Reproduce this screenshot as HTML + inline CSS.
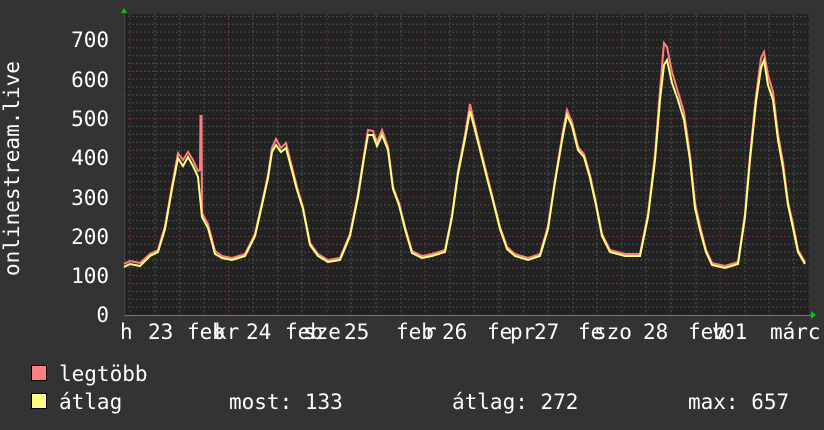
<!DOCTYPE html>
<html><head><meta charset="utf-8"><style>
html,body{margin:0;padding:0;background:#333;}
svg{display:block}
text{font-family:"DejaVu Sans Mono","Liberation Mono",monospace;fill:#fff;}
</style></head><body>
<svg width="824" height="430" xmlns="http://www.w3.org/2000/svg">
<rect width="824" height="430" fill="#333"/>
<rect x="124" y="14" width="685" height="301" fill="#222"/>
<g stroke="#4d4d4d" stroke-dasharray="2,2" stroke-width="1">
<path d="M124 307.1H809M124 299.3H809M124 291.4H809M124 283.6H809M124 267.9H809M124 260H809M124 252.1H809M124 244.3H809M124 228.6H809M124 220.7H809M124 212.9H809M124 205H809M124 189.3H809M124 181.4H809M124 173.6H809M124 165.7H809M124 150H809M124 142.1H809M124 134.3H809M124 126.4H809M124 110.7H809M124 102.9H809M124 95H809M124 87.1H809M124 71.4H809M124 63.6H809M124 55.7H809M124 47.9H809M124 32.1H809M124 24.3H809M124 16.4H809"/>
<path d="M155 14V315M179.5 14V315M204 14V315M253 14V315M278 14V315M302 14V315M351 14V315M376 14V315M401 14V315M450 14V315M474 14V315M499 14V315M548 14V315M573 14V315M597 14V315M646 14V315M671 14V315M696 14V315M745 14V315M769 14V315M794 14V315"/>
</g>
<g stroke="#6b3333" stroke-dasharray="2,2" stroke-width="1">
<path d="M124 275.7H809M124 236.4H809M124 197.1H809M124 157.9H809M124 118.6H809M124 79.3H809M124 40H809"/>
<path d="M130 14V315M228.5 14V315M327 14V315M425 14V315M523.5 14V315M622 14V315M720 14V315"/>
</g>
<line x1="124" y1="315.5" x2="812" y2="315.5" stroke="#777"/>
<line x1="124.5" y1="12" x2="124.5" y2="318" stroke="#444"/>
<polygon points="121,13 127,13 124,8" fill="#0c0"/>
<polygon points="811,311 811,319 816,315" fill="#0c0"/>
<polyline fill="none" stroke="#ff7f7f" stroke-width="2" points="124,264 130,261 140,263 150,254 158,250 165,226 172,186 178,153 183,160 188,152 193,160 198,171 200,170 200.5,116 201.5,116 202,213 208,224 215,251 222,256 232,258 245,254 255,234 262,203 268,175 272,148 276,139 281,148 286,143 291,163 297,187 303,207 310,243 318,254 328,260 340,258 350,234 358,194 364,155 368,130 373,131 377,142 382,130 388,147 393,187 399,203 405,227 412,251 422,256 432,254 445,250 452,215 458,171 465,135 470,104 475,126 480,147 487,175 493,199 500,227 507,247 515,254 528,258 540,254 548,226 555,180 563,131 567,110 572,122 578,147 584,154 590,175 596,203 602,234 610,250 625,254 640,254 648,214 655,155 660,90 664,43 667,47 672,72 678,92 684,112 690,155 695,203 700,226 706,250 712,263 725,266 738,262 745,214 750,155 756,96 761,58 764,52 768,75 773,92 778,134 783,162 788,202 793,224 798,250 805,262"/>
<polyline fill="none" stroke="#ffff7f" stroke-width="2" points="124,267 130,264 140,266 150,256 158,252 165,229 172,189 178,158 183,166 188,157 193,166 198,177 202,217 208,228 215,254 222,258 232,260 245,256 255,236 262,205 268,178 272,152 276,145 281,152 286,148 291,167 297,190 303,209 310,245 318,256 328,262 340,260 350,236 358,197 364,158 368,135 373,135 377,146 382,135 388,150 393,189 399,205 405,229 412,253 422,258 432,256 445,252 452,217 458,174 465,139 470,111 475,130 480,150 487,178 493,201 500,229 507,249 515,256 528,260 540,256 548,229 555,182 563,135 567,115 572,126 578,150 584,157 590,178 596,205 602,236 610,252 625,256 640,256 648,217 655,160 660,100 664,65 667,60 672,83 678,100 684,120 690,160 695,208 700,230 706,252 712,265 725,268 738,264 745,217 750,160 756,102 761,68 764,60 768,85 773,100 778,140 783,168 788,205 793,228 798,252 805,264"/>
<g font-size="21" text-anchor="end">
<text x="109" y="47">700</text><text x="109" y="87">600</text><text x="109" y="126">500</text><text x="109" y="165">400</text><text x="109" y="205">300</text><text x="109" y="244">200</text><text x="109" y="283">100</text><text x="109" y="322">0</text>
</g>
<text transform="translate(19,276) rotate(-90)" font-size="21">onlinestream.live</text>
<g font-size="21">
<text x="120" y="339">h</text>
<text x="148" y="339">23</text><text x="187" y="339">feb</text><text x="214" y="339">kr</text>
<text x="246" y="339">24</text><text x="285" y="339">feb</text><text x="303" y="339">sze</text>
<text x="344" y="339">25</text><text x="396" y="339">feb</text><text x="424" y="339">r</text><text x="442" y="339">26</text>
<text x="487" y="339">fe</text><text x="510" y="339">pr</text><text x="534" y="339">27</text>
<text x="578" y="339">fe</text><text x="594" y="339">szo</text><text x="643" y="339">28</text>
<text x="688" y="339">feb</text><text x="712" y="339">v</text><text x="722" y="339">01</text>
<text x="770" y="339">márc</text>
</g>
<rect x="31.5" y="365.5" width="15" height="15" fill="#ff7f7f" stroke="#000"/>
<rect x="31.5" y="393.5" width="15" height="15" fill="#ffff7f" stroke="#000"/>
<g font-size="21">
<text x="59" y="381">legtöbb</text>
<text x="59" y="409">átlag</text>
<text x="229" y="409">most: 133</text>
<text x="452" y="409">átlag: 272</text>
<text x="688" y="409">max: 657</text>
</g>
</svg>
</body></html>
